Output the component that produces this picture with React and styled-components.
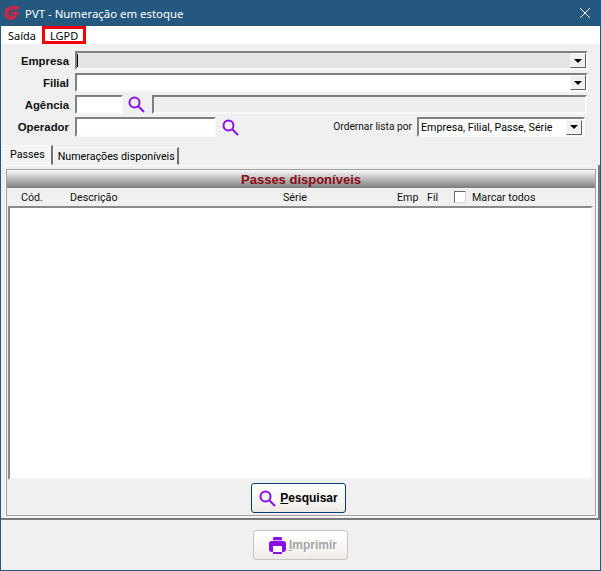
import React from 'react'
import styled, { createGlobalStyle } from 'styled-components'

const GlobalStyle = createGlobalStyle`
  html, body { margin: 0; padding: 0; background: #f0f0f0; }
  body { font-family: Roboto, "Liberation Sans", Arial, sans-serif; font-size: 10.7px; color: #000; }
`

const Window = styled.div`
  width: 601px;
  height: 571px;
  box-sizing: border-box;
  border: solid #24587f;
  border-width: 0 1px 1px 1px;
  display: flex;
  flex-direction: column;
  background: #f0f0f0;
  overflow: hidden;
`

const TitleBar = styled.div`
  height: 26px;
  margin: 0 -1px;
  padding: 0 11px 0 4px;
  flex: none;
  display: flex;
  align-items: center;
  gap: 5px;
  background: #24587f;
  color: #fff;
  font-size: 11.4px;
  font-family: "Noto Sans", sans-serif;
`

const TitleText = styled.span`
  flex: 1;
`

const MenuBar = styled.div`
  height: 18px;
  flex: none;
  display: flex;
  align-items: center;
  background: #fff;
  padding-left: 2px;
  font-family: "Noto Sans", sans-serif;
  font-size: 11px;
`

const MenuItem = styled.div`
  height: 18px;
  box-sizing: border-box;
  display: flex;
  align-items: center;
  padding: 0 5px;
  ${p => p.$boxed && `
    width: 44px;
    margin-left: 1px;
    border: 3px solid #f00000;
  `}
`

const Form = styled.div`
  flex: none;
  height: 100px;
  box-sizing: border-box;
  padding-top: 7px;
  display: flex;
  flex-direction: column;
  gap: 3px;
`

const Row = styled.div`
  height: ${p => p.$h || 19}px;
  display: flex;
  align-items: stretch;
`

const Label = styled.div`
  width: 68px;
  margin-right: 6px;
  flex: none;
  text-align: right;
  font-family: "Liberation Sans", sans-serif;
  font-weight: bold;
  font-size: 11.4px;
  line-height: 20px;
  color: #111;
`

const Field = styled.div`
  box-sizing: border-box;
  width: ${p => (p.$w ? `${p.$w}px` : 'auto')};
  flex: ${p => (p.$w ? 'none' : '1')};
  margin-left: ${p => p.$ml || 0}px;
  margin-right: ${p => p.$mr || 0}px;
  border: 2px solid;
  border-color: #808080 #fafafa #fafafa #808080;
  background: ${p => (p.$off ? (p.$soft ? '#efefef' : '#e4e4e4') : '#fff')};
  display: flex;
  justify-content: flex-end;
  align-items: center;
  overflow: hidden;
`

const Caret = styled.div`
  width: 1px;
  height: 13px;
  background: #000;
  margin-right: auto;
`

const DropButton = styled.div`
  width: 16px;
  height: 15px;
  box-sizing: border-box;
  flex: none;
  background: #f0f0f0;
  border: 1px solid;
  border-color: #f8f8f8 #606060 #606060 #f8f8f8;
  display: flex;
  align-items: center;
  justify-content: center;
  &::after {
    content: '';
    border: 4px solid transparent;
    border-top: 4px solid #000;
    border-bottom: 0;
  }
`

const IconSlot = styled.div`
  width: 18px;
  margin-left: ${p => p.$ml || 0}px;
  flex: none;
  display: flex;
  align-items: center;
  justify-content: center;
`

const SortGroup = styled.div`
  margin-left: auto;
  margin-right: 15px;
  display: flex;
  align-items: center;
  gap: 5px;
`

const SortText = styled.span`
  font-size: 10.2px;
  line-height: 1;
  color: #111;
`

const SortValue = styled.span`
  flex: 1;
  padding-left: 2px;
  white-space: nowrap;
`

const Select = styled(Field)`
  height: 20px;
  padding-right: 1px;
`

const Tabs = styled.div`
  height: 21px;
  flex: none;
  display: flex;
  align-items: flex-end;
  padding-left: 2px;
`

const Tab = styled.div`
  height: ${p => (p.$active ? 20 : 18)}px;
  box-sizing: border-box;
  padding: ${p => (p.$active ? '0 6px' : '0 2px 0 4px')};
  line-height: 17px;
  border: 1px solid;
  border-color: #fafafa #707070 transparent #fafafa;
  border-right-width: 2px;
  background: ${p => (p.$active ? '#f4f4f4' : '#f0f0f0')};
  white-space: nowrap;
`

const Sheet = styled.div`
  height: 355px;
  flex: none;
  box-sizing: border-box;
  padding: 0 1px 1px 4px;
  border-right: 2px solid #7a7a7a;
  border-bottom: 2px solid #7a7a7a;
  display: flex;
`

const Panel = styled.div`
  flex: 1;
  box-sizing: border-box;
  padding-top: 3px;
  border: 1px solid #fbfbfb;
  display: flex;
`

const Frame = styled.div`
  flex: 1;
  box-sizing: border-box;
  border: 1px solid #a0a0a0;
  display: flex;
  flex-direction: column;
`

const PanelTitle = styled.div`
  height: 18px;
  flex: none;
  background: linear-gradient(#fbfbfb, #7c7c7c);
  color: #8b0a14;
  text-align: center;
  font-family: "Liberation Sans", sans-serif;
  font-weight: bold;
  font-size: 13px;
  line-height: 19px;
`

const Columns = styled.div`
  height: 18px;
  flex: none;
  display: grid;
  grid-template-columns: 49px 213px 114px 30px 27px 18px 1fr;
  align-items: center;
  padding-left: 14px;
  color: #111;
`

const Check = styled.div`
  width: 12px;
  height: 12px;
  box-sizing: border-box;
  background: #fff;
  border: 1px solid;
  border-color: #6a6a6a #d8d8d8 #d8d8d8 #6a6a6a;
`

const List = styled.div`
  flex: none;
  height: 274px;
  box-sizing: border-box;
  margin: 0 2px 0 1px;
  background: #fff;
  border: 2px solid;
  border-color: #8a8a8a #f4f4f4 #f4f4f4 #8a8a8a;
`

const Actions = styled.div`
  flex: 1;
  display: flex;
  justify-content: center;
  align-items: flex-start;
  padding-top: 3px;
  padding-right: 6px;
`

const Button = styled.div`
  width: 95px;
  height: 30px;
  box-sizing: border-box;
  padding-left: ${p => (p.$off ? 5 : 1)}px;
  display: flex;
  align-items: center;
  justify-content: center;
  gap: ${p => (p.$off ? 3 : 4)}px;
  border: 1px solid ${p => (p.$off ? '#c8c5be' : '#003c74')};
  border-radius: 3px;
  background: linear-gradient(#fff, #f6f4f0 70%, #ece9e3);
  font-family: "Liberation Sans", sans-serif;
  font-weight: bold;
  font-size: 12px;
  color: ${p => (p.$off ? '#a4a4a4' : '#000')};
  text-shadow: ${p => (p.$off ? '1px 1px 0 #fff' : 'none')};
`

const Footer = styled.div`
  flex: 1;
  display: flex;
  justify-content: center;
  padding-top: 10px;
`

const Logo = () => (
  <svg width="16" height="16" viewBox="0 0 16 16">
    <path d="M15.500 1H8C3.800 1 .5 4.200 .5 8.300 .5 12.300 3.500 15 7.300 15c2.200 0 4.300-1 5.300-3L15 6.500H7.500L6.600 9.500h3.700c-.6 1-1.600 1.600-2.800 1.600-1.800 0-3-1.300-3-3 0-2 1.600-3.400 3.600-3.400h6.200z" fill="#c2294a" />
  </svg>
)

const CloseIcon = () => (
  <svg width="10" height="10" viewBox="0 0 10 10">
    <path d="M0 0L10 10M10 0L0 10" stroke="#fff" strokeWidth="1" />
  </svg>
)

const SearchIcon = () => (
  <svg width="17" height="17" viewBox="0 0 17 17" fill="none">
    <circle cx="6.500" cy="6.500" r="5" stroke="#8a0fe6" strokeWidth="2" />
    <path d="M10.500 10.500L16 16" stroke="#8a0fe6" strokeWidth="2" />
  </svg>
)

const PrintIcon = () => (
  <svg width="17" height="17" viewBox="0 0 17 17">
    <path d="M4 1.500C4 .7 4.700 0 5.500 0h6C12.300 0 13 .7 13 1.500V4h1.500C16 4 17 5 17 6.500v6c0 1.500-1 2.500-2.500 2.500H13v2H4v-2H2.500C1 15 0 14 0 12.500v-6C0 5 1 4 2.500 4H4z" fill="#8a0fe6" />
    <rect x="4" y="9" width="9" height="6" fill="#fff" />
    <rect x="4" y="3" width="9" height="1" fill="#d9b3f7" />
  </svg>
)

export default function App() {
  return (
    <Window>
      <GlobalStyle />
      <TitleBar>
        <Logo />
        <TitleText>PVT - Numeração em estoque</TitleText>
        <CloseIcon />
      </TitleBar>
      <MenuBar>
        <MenuItem>Saída</MenuItem>
        <MenuItem $boxed>LGPD</MenuItem>
      </MenuBar>
      <Form>
        <Row>
          <Label>Empresa</Label>
          <Field $off $mr={12}>
            <Caret />
            <DropButton />
          </Field>
        </Row>
        <Row>
          <Label>Filial</Label>
          <Field $mr={12}>
            <DropButton />
          </Field>
        </Row>
        <Row>
          <Label>Agência</Label>
          <Field $w={48} />
          <IconSlot $ml={4}><SearchIcon /></IconSlot>
          <Field $off $soft $ml={7} $mr={13} />
        </Row>
        <Row $h={20}>
          <Label>Operador</Label>
          <Field $w={141} />
          <IconSlot $ml={5}><SearchIcon /></IconSlot>
          <SortGroup>
            <SortText>Ordernar lista por</SortText>
            <Select $w={168}>
              <SortValue>Empresa, Filial, Passe, Série</SortValue>
              <DropButton />
            </Select>
          </SortGroup>
        </Row>
      </Form>
      <Tabs>
        <Tab $active>Passes</Tab>
        <Tab>Numerações disponíveis</Tab>
      </Tabs>
      <Sheet>
        <Panel>
          <Frame>
            <PanelTitle>Passes disponíveis</PanelTitle>
            <Columns>
              <span>Cód.</span>
              <span>Descrição</span>
              <span>Série</span>
              <span>Emp</span>
              <span>Fil</span>
              <Check />
              <span>Marcar todos</span>
            </Columns>
            <List />
            <Actions>
              <Button><SearchIcon /><span><u>P</u>esquisar</span></Button>
            </Actions>
          </Frame>
        </Panel>
      </Sheet>
      <Footer>
        <Button $off><PrintIcon /><span><u>I</u>mprimir</span></Button>
      </Footer>
    </Window>
  )
}
